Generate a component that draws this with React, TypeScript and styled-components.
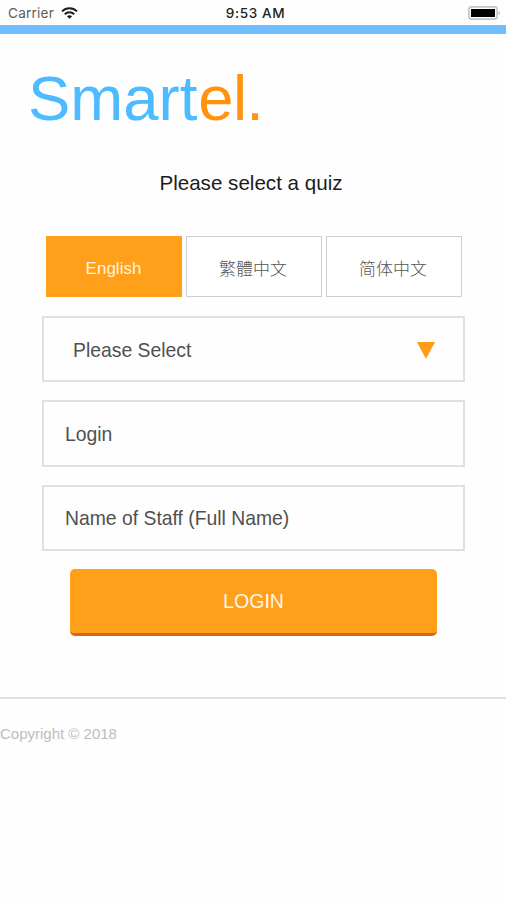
import React from "react";
import styled, { createGlobalStyle } from "styled-components";

const Global = createGlobalStyle`
  * { box-sizing: border-box; }
  body { margin: 0; background: #fefefe; font-family: "Liberation Sans", "Noto Sans CJK SC", sans-serif; }
`;

const Page = styled.div`
  display: flex;
  flex-direction: column;
  width: 506px;
  height: 900px;
  background: #fefefe;
  overflow: hidden;
`;

const StatusBar = styled.header`
  display: grid;
  grid-template-columns: 1fr auto 1fr;
  align-items: center;
  height: 25px;
  padding: 1px 5px 0 8px;
  font-family: Inter, sans-serif;
  font-size: 13.6px;
  color: #5c5c5c;
`;

const Carrier = styled.div`
  display: flex;
  align-items: center;
  gap: 7px;
  letter-spacing: 0.2px;
`;

const Clock = styled.div`
  padding-left: 2px;
  color: #222;
  font-weight: 500;
  letter-spacing: 0.6px;
`;

const BatterySlot = styled.div`
  display: flex;
  justify-content: flex-end;
`;

const Accent = styled.div`
  height: 9px;
  background: #6fbdff;
`;

const Logo = styled.h1`
  margin: 28px 0 0 28px;
  font-size: 63.5px;
  line-height: 73px;
  font-weight: 400;
  color: #4dbbff;
`;

const LogoTail = styled.span`
  margin-left: 1px;
  letter-spacing: -0.8px;
  color: #ff9310;
`;

const Prompt = styled.p`
  margin: 36px 0 0;
  padding-right: 4px;
  font-size: 20.6px;
  line-height: 24px;
  text-align: center;
  color: #1c1c1c;
`;

const Tabs = styled.div`
  display: grid;
  grid-template-columns: repeat(3, 136px);
  column-gap: 4px;
  margin: 41px 0 0 46px;
`;

const Tab = styled.button<{ $active?: boolean }>`
  height: 61px;
  padding: ${(p) => (p.$active ? "4px 1px 0 0" : "2px 2px 0 0")};
  border: ${(p) => (p.$active ? "0" : "1.5px solid #cfcfcf")};
  background: ${(p) => (p.$active ? "#ff9f1a" : "#fff")};
  color: ${(p) => (p.$active ? "#fff3df" : "#555")};
  font-family: "Liberation Sans", "Noto Sans CJK SC", sans-serif;
  font-size: 17px;
  font-weight: ${(p) => (p.$active ? 400 : 300)};
`;

const Fields = styled.div`
  display: flex;
  flex-direction: column;
  gap: 18px;
  margin: 19px 41px 0 42px;
`;

const Field = styled.div<{ $inset: number }>`
  display: flex;
  align-items: center;
  justify-content: space-between;
  height: 66.4px;
  padding: 2px 28px 0 ${(p) => p.$inset}px;
  border: 2px solid #e0e0e0;
  font-size: 19.35px;
  color: #505050;
`;

const LoginButton = styled.button`
  width: 367px;
  height: 67px;
  margin: 18px 0 0 70px;
  padding: 1px 0 0;
  border: 0;
  border-bottom: 3px solid #dc6412;
  border-radius: 5px;
  background: #ff9f1a;
  color: #fff6e8;
  font-family: "Liberation Sans", sans-serif;
  font-size: 19.6px;
`;

const Footer = styled.footer`
  margin-top: 60.8px;
  padding-top: 26px;
  border-top: 2px solid #dfdfdf;
  font-size: 15px;
  line-height: 18px;
  color: #bdbdbd;
`;

const Wifi = () => (
  <svg width="17" height="12" viewBox="0 0 17 12" fill="none" stroke="#1b1b1b" strokeWidth="2">
    <path d="M1 4.4C5.2 0.2 11.8 0.2 16 4.4" />
    <path d="M3.8 7.2C6.5 4.6 10.5 4.6 13.2 7.2" />
    <path d="M8.5 11.8L5.9 9.3C7.4 8 9.6 8 11.1 9.3Z" fill="#1b1b1b" stroke="none" />
  </svg>
);

const Battery = () => (
  <svg width="33" height="14" viewBox="0 0 33 14">
    <rect x="0.9" y="0.9" width="28.2" height="12.2" rx="2.6" fill="#fff" stroke="#c4c4c4" strokeWidth="1.6" />
    <rect x="3" y="3" width="24" height="8" fill="#000" />
    <path d="M30.4 5C32.6 5.8 32.6 8.2 30.4 9Z" fill="#c4c4c4" />
  </svg>
);

const Arrow = () => (
  <svg width="18" height="17" viewBox="0 0 18 17">
    <path d="M0 0H18L9 17Z" fill="#ff9c14" />
  </svg>
);

export default function App() {
  return (
    <Page>
      <Global />
      <StatusBar>
        <Carrier>
          Carrier <Wifi />
        </Carrier>
        <Clock>9:53 AM</Clock>
        <BatterySlot>
          <Battery />
        </BatterySlot>
      </StatusBar>
      <Accent />
      <Logo>
        Smart<LogoTail>el.</LogoTail>
      </Logo>
      <Prompt>Please select a quiz</Prompt>
      <Tabs>
        <Tab $active>English</Tab>
        <Tab>繁體中文</Tab>
        <Tab>简体中文</Tab>
      </Tabs>
      <Fields>
        <Field $inset={29}>
          Please Select <Arrow />
        </Field>
        <Field $inset={21}>Login</Field>
        <Field $inset={21}>Name of Staff (Full Name)</Field>
      </Fields>
      <LoginButton>LOGIN</LoginButton>
      <Footer>Copyright © 2018</Footer>
    </Page>
  );
}
